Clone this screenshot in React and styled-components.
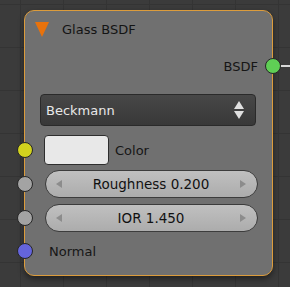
import * as React from "react"
import styled, { createGlobalStyle } from "styled-components"

const Global = createGlobalStyle`
  html, body {
    margin: 0;
    padding: 0;
    background: #3a3a3a;
  }
  * { box-sizing: border-box; }
`

const Canvas = styled.div`
  width: 290px;
  height: 287px;
  overflow: hidden;
  padding: 10px 0 0 24px;
  font-family: "DejaVu Sans", "Liberation Sans", sans-serif;
  font-size: 13px;
  background-color: #3b3b3b;
  background-image:
    linear-gradient(to right, #343434 1px, transparent 1px),
    linear-gradient(to bottom, #343434 1px, transparent 1px);
  background-size: 43px 43px;
  background-position: 20px 4px;
`

const Node = styled.div`
  position: relative;
  width: 249px;
  height: 266px;
  border: 1px solid #dc9c3c;
  border-radius: 10px;
  background: #707070;
  box-shadow: 0 3px 6px rgba(0, 0, 0, 0.45);
  display: flex;
  flex-direction: column;
`

const Header = styled.div`
  height: 32px;
  display: flex;
  align-items: center;
  padding: 5px 0 0 10px;
  gap: 13px;
  color: #141414;
`

const Triangle = styled.div`
  width: 0;
  height: 0;
  border-left: 7px solid transparent;
  border-right: 7px solid transparent;
  border-top: 15px solid #e8720c;
`

const Row = styled.div`
  position: relative;
  height: ${({ h }) => h || 24}px;
  margin-top: ${({ mt }) => mt || 0}px;
  display: flex;
  align-items: center;
  justify-content: ${({ right }) => (right ? "flex-end" : "flex-start")};
  padding: ${({ pad }) => pad || "0"};
  color: #161616;
`

const Socket = styled.span`
  position: absolute;
  top: 50%;
  ${({ side }) => (side === "right" ? "right: -8.5px;" : "left: -8.5px;")}
  width: 16px;
  height: 16px;
  margin-top: -8px;
  border-radius: 50%;
  background: ${({ color }) => color};
  border: 1px solid #262626;
  z-index: 2;
`

const Link = styled.span`
  position: absolute;
  top: 50%;
  right: -30px;
  width: 24px;
  height: 2px;
  margin-top: -1px;
  background: #d8d8d8;
  z-index: 1;
`

const Dropdown = styled.div`
  height: 32px;
  margin: 16px 16px 0 15px;
  border: 1px solid #2a2a2a;
  border-radius: 4px;
  background: linear-gradient(#474747, #383838);
  display: flex;
  align-items: center;
  justify-content: space-between;
  padding: 0 11px 0 5px;
  color: #e8e8e8;
`

const Arrows = styled.div`
  display: flex;
  flex-direction: column;
  gap: 2px;
`

const Arrow = styled.span`
  width: 0;
  height: 0;
  border-left: 5px solid transparent;
  border-right: 5px solid transparent;
  ${({ down }) => (down ? "border-top: 8px solid #e0e0e0;" : "border-bottom: 8px solid #e0e0e0;")}
`

const Swatch = styled.div`
  width: 65px;
  height: 30px;
  border: 1px solid #2e2e2e;
  border-radius: 4px;
  background: #e8e8e8;
  margin-right: 6px;
`

const Slider = styled.div`
  position: relative;
  height: 28px;
  margin: ${({ mt }) => mt}px 14px 0 20px;
  border: 1px solid #3c3c3c;
  border-radius: 14px;
  background: linear-gradient(#c0c0c0, #acacac);
  display: flex;
  align-items: center;
  justify-content: space-between;
  padding: 0 11px 0 10px;
  color: #111;
  font-size: 13.5px;
`

const SideArrow = styled.span`
  width: 0;
  height: 0;
  border-top: 4px solid transparent;
  border-bottom: 4px solid transparent;
  ${({ right }) => (right ? "border-left: 6px solid #8c8c8c;" : "border-right: 6px solid #8c8c8c;")}
`

const SocketAnchor = styled.span`
  position: absolute;
  left: -21px;
  top: 50%;
  width: 0;
  height: 0;
`

const SliderSocket = styled(Socket)`
  left: -8px;
  top: 0;
`

const Field = ({ label, mt, socketColor }) => (
  <Slider mt={mt}>
    <SocketAnchor>
      <SliderSocket color={socketColor} />
    </SocketAnchor>
    <SideArrow />
    <span>{label}</span>
    <SideArrow right />
  </Slider>
)

export default function App() {
  return (
    <Canvas>
      <Global />
      <Node>
        <Header>
          <Triangle />
          <span>Glass BSDF</span>
        </Header>
        <Row right mt={11} pad="0 14px 0 0">
          <span>BSDF</span>
          <Socket side="right" color="#5fcf55" />
          <Link />
        </Row>
        <Dropdown>
          <span>Beckmann</span>
          <Arrows>
            <Arrow />
            <Arrow down />
          </Arrows>
        </Dropdown>
        <Row h={30} mt={9} pad="0 0 0 19px">
          <Socket color="#d2d21e" />
          <Swatch />
          <span>Color</span>
        </Row>
        <Field label="Roughness 0.200" mt={5} socketColor="#a3a3a3" />
        <Field label="IOR 1.450" mt={6} socketColor="#a3a3a3" />
        <Row mt={7} pad="0 0 0 24px">
          <Socket color="#6464dc" />
          <span>Normal</span>
        </Row>
      </Node>
    </Canvas>
  )
}
